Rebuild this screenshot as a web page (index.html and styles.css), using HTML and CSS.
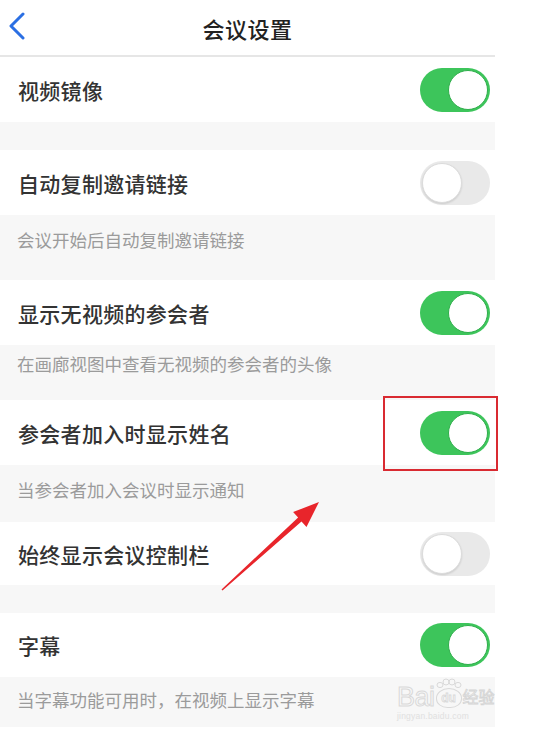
FILE: index.html
```html
<!DOCTYPE html>
<html lang="zh-CN">
<head>
    <meta charset="UTF-8">
    <meta name="viewport" content="width=device-width, initial-scale=1.0">
    <title>会议设置</title>
    <link rel="stylesheet" href="styles.css">
</head>
<body>

    <div class="screen">
        <header class="nav">
            <svg class="back" viewBox="0 0 18 28">
                <polyline points="15,2 3,14 15,26"></polyline>
            </svg>
            <h1>会议设置</h1>
        </header>

        <div class="row r1"><span class="label">视频镜像</span><span class="switch on"></span></div>
        <div class="gap"></div>

        <div class="row r2"><span class="label">自动复制邀请链接</span><span class="switch"></span></div>
        <p class="desc d1">会议开始后自动复制邀请链接</p>

        <div class="row r3"><span class="label">显示无视频的参会者</span><span class="switch on"></span></div>
        <p class="desc d2">在画廊视图中查看无视频的参会者的头像</p>

        <div class="row r4"><span class="label">参会者加入时显示姓名</span><span class="switch on"></span></div>
        <p class="desc d3">当参会者加入会议时显示通知</p>

        <div class="row r5"><span class="label">始终显示会议控制栏</span><span class="switch"></span></div>
        <div class="gap"></div>

        <div class="row r6"><span class="label">字幕</span><span class="switch on"></span></div>
        <p class="desc d4">当字幕功能可用时，在视频上显示字幕</p>
    </div>

    <!-- 标注：红框 + 箭头 -->
    <div class="mark-box"></div>
    <svg class="mark-arrow" viewBox="0 0 536 745">
        <polygon points="221.5,589.4 298.1,517.6 293.1,512.1 319,502 306.5,526.9 301.5,521.4 222.5,590.6"></polygon>
    </svg>

    <!-- 水印 -->
    <div class="watermark">
        <div class="wm-top">
            <span class="wm-bai">Bai</span>
            <span class="wm-du">
                <svg class="wm-paw" viewBox="0 0 26 10">
                    <ellipse cx="4" cy="7" rx="3" ry="2.6"></ellipse>
                    <ellipse cx="10" cy="4" rx="3" ry="3"></ellipse>
                    <ellipse cx="16" cy="4" rx="3" ry="3"></ellipse>
                    <ellipse cx="22" cy="7" rx="3" ry="2.6"></ellipse>
                </svg>
                du
            </span>
            <span class="wm-jy">经验</span>
        </div>
        <div class="wm-url">jingyan.baidu.com</div>
    </div>

</body>
</html>
```

FILE: styles.css
```css
:root {
    --band: #f7f7f7;
    --label: #333333;
    --desc: #9b9b9b;
    --green: #3dc55b;
    --red: #d92a31;
    --wm: #d9d9d9;
}

body {
    margin: 0;
    background: #ffffff;
    font-family: "Noto Sans CJK SC", "Noto Sans", sans-serif;
    position: relative;
    width: 536px;
    height: 745px;
    overflow: hidden;
}

.screen {
    width: 495px;
    display: flex;
    flex-direction: column;
}

/* --- 顶栏 --- */
.nav {
    height: 55px;
    border-bottom: 2px solid #e6e6e6;
    display: flex;
    align-items: center;
    justify-content: center;
    position: relative;
}
.nav h1 {
    margin: 0;
    font-size: 22px;
    font-weight: 500;
    color: #222;
    letter-spacing: 0.5px;
}
.back {
    position: absolute;
    left: 8px;
    top: 12px;
    width: 18px;
    height: 28px;
    fill: none;
    stroke: #2b6fe3;
    stroke-width: 3;
    stroke-linecap: round;
    stroke-linejoin: round;
}

/* --- 设置行 --- */
.row {
    height: 65px;
    background: #fff;
    display: flex;
    align-items: center;
    justify-content: space-between;
    padding: 0 5px 0 18px;
}
.r5 { height: 63px; }
.r6 { height: 64px; }
.label {
    font-size: 21px;
    font-weight: 500;
    color: var(--label);
    letter-spacing: 0.3px;
}

.gap {
    height: 28px;
    background: var(--band);
}

.desc {
    margin: 0;
    background: var(--band);
    padding: 14px 17px 0;
    box-sizing: border-box;
    font-size: 17.5px;
    line-height: 22px;
    color: var(--desc);
}
.d1 { height: 65px; }
.d2 { height: 55px; padding-top: 8px; }
.d3 { height: 57px; }
.d4 { height: 50px; padding-top: 12px; }

/* --- 开关 --- */
.switch {
    width: 70px;
    height: 44px;
    border-radius: 22px;
    background: #e9e9e9;
    position: relative;
    flex: none;
}
.switch::after {
    content: '';
    position: absolute;
    top: 2px;
    left: 2px;
    width: 38px;
    height: 38px;
    border-radius: 50%;
    background: #fff;
    border: 1px solid #dcdcdc;
    box-shadow: 0 1px 2px rgba(0, 0, 0, 0.12);
}
.switch.on {
    background: var(--green);
}
.switch.on::after {
    left: auto;
    right: 2px;
    border-color: #2fae4b;
    box-shadow: none;
}

/* --- 标注 --- */
.mark-box {
    position: absolute;
    left: 383px;
    top: 396px;
    width: 111px;
    height: 71px;
    border: 2px solid var(--red);
}
.mark-arrow {
    position: absolute;
    left: 0;
    top: 0;
    width: 536px;
    height: 745px;
    fill: #e8252b;
    pointer-events: none;
}

/* --- 水印 --- */
.watermark {
    position: absolute;
    left: 397px;
    top: 683px;
    width: 98px;
    color: transparent;
    font-family: "Liberation Sans", "Noto Sans CJK SC", sans-serif;
}
.wm-top {
    display: flex;
    align-items: flex-end;
}
.wm-bai {
    font-size: 27px;
    line-height: 28px;
    letter-spacing: -0.5px;
    -webkit-text-stroke: 1px var(--wm);
}
.wm-du {
    position: relative;
    font-size: 12px;
    font-weight: bold;
    line-height: 18px;
    width: 24px;
    height: 18px;
    margin: 0 1px 3px;
    text-align: center;
    border: 1px solid var(--wm);
    border-radius: 50% 50% 45% 45%;
    -webkit-text-stroke: 0.8px var(--wm);
}
.wm-paw {
    position: absolute;
    left: -1px;
    top: -11px;
    width: 26px;
    height: 10px;
    fill: none;
    stroke: var(--wm);
    stroke-width: 1;
}
.wm-jy {
    font-size: 16px;
    line-height: 26px;
    -webkit-text-stroke: 0.8px #d4d4d4;
}
.wm-url {
    font-size: 8.5px;
    line-height: 10px;
    color: #e0e0e0;
    letter-spacing: 0.2px;
}
```
